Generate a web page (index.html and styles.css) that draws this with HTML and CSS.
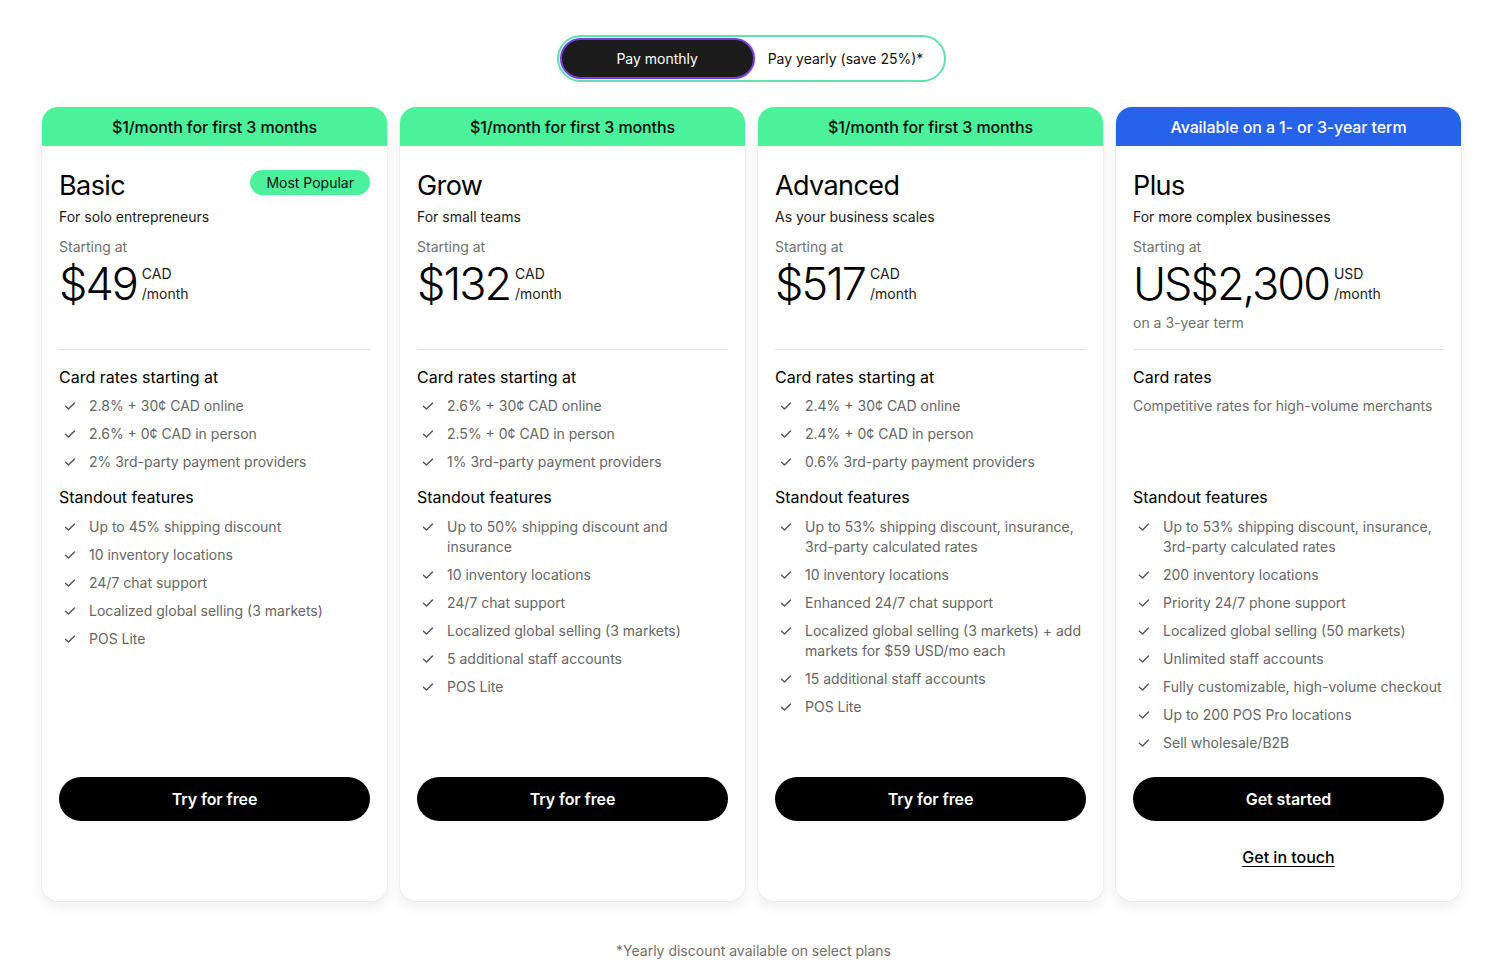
FILE: index.html
```html
<!DOCTYPE html>
<html lang="en">
<head>
<meta charset="utf-8">
<title>Pricing</title>
<link rel="stylesheet" href="styles.css">
</head>
<body>
<main class="page">
  <div class="toggle-wrap">
    <div class="toggle">
      <button class="toggle-opt is-active">Pay monthly</button>
      <button class="toggle-opt">Pay yearly (save 25%)*</button>
    </div>
  </div>

  <section class="plans">
    <article class="card">
      <div class="band band-green">$1/month for first 3 months</div>
      <div class="body">
        <div class="top">
          <div class="title-row">
            <h2 class="name">Basic</h2>
            <span class="badge">Most Popular</span>
          </div>
          <p class="desc">For solo entrepreneurs</p>
          <p class="starting">Starting at</p>
          <div class="price-row">
            <span class="price">$49</span>
            <span class="unit"><span>CAD</span><span>/month</span></span>
          </div>
        </div>
        <hr class="divider">
        <div class="rates">
          <h3 class="sec-title">Card rates starting at</h3>
          <ul class="list">
            <li><svg class="chk" viewBox="0 0 12 12"><path d="M1.5 6.2l3 2.9 6-6.2"/></svg><span>2.8% + 30¢ CAD online</span></li>
            <li><svg class="chk" viewBox="0 0 12 12"><path d="M1.5 6.2l3 2.9 6-6.2"/></svg><span>2.6% + 0¢ CAD in person</span></li>
            <li><svg class="chk" viewBox="0 0 12 12"><path d="M1.5 6.2l3 2.9 6-6.2"/></svg><span>2% 3rd-party payment providers</span></li>
          </ul>
        </div>
        <div class="features">
          <h3 class="sec-title">Standout features</h3>
          <ul class="list">
            <li><svg class="chk" viewBox="0 0 12 12"><path d="M1.5 6.2l3 2.9 6-6.2"/></svg><span>Up to 45% shipping discount</span></li>
            <li><svg class="chk" viewBox="0 0 12 12"><path d="M1.5 6.2l3 2.9 6-6.2"/></svg><span>10 inventory locations</span></li>
            <li><svg class="chk" viewBox="0 0 12 12"><path d="M1.5 6.2l3 2.9 6-6.2"/></svg><span>24/7 chat support</span></li>
            <li><svg class="chk" viewBox="0 0 12 12"><path d="M1.5 6.2l3 2.9 6-6.2"/></svg><span>Localized global selling (3 markets)</span></li>
            <li><svg class="chk" viewBox="0 0 12 12"><path d="M1.5 6.2l3 2.9 6-6.2"/></svg><span>POS Lite</span></li>
          </ul>
        </div>
        <div class="actions">
          <a class="btn" href="#">Try for free</a>
          <div class="foot"></div>
        </div>
      </div>
    </article>

    <article class="card">
      <div class="band band-green">$1/month for first 3 months</div>
      <div class="body">
        <div class="top">
          <div class="title-row">
            <h2 class="name">Grow</h2>
          </div>
          <p class="desc">For small teams</p>
          <p class="starting">Starting at</p>
          <div class="price-row">
            <span class="price">$132</span>
            <span class="unit"><span>CAD</span><span>/month</span></span>
          </div>
        </div>
        <hr class="divider">
        <div class="rates">
          <h3 class="sec-title">Card rates starting at</h3>
          <ul class="list">
            <li><svg class="chk" viewBox="0 0 12 12"><path d="M1.5 6.2l3 2.9 6-6.2"/></svg><span>2.6% + 30¢ CAD online</span></li>
            <li><svg class="chk" viewBox="0 0 12 12"><path d="M1.5 6.2l3 2.9 6-6.2"/></svg><span>2.5% + 0¢ CAD in person</span></li>
            <li><svg class="chk" viewBox="0 0 12 12"><path d="M1.5 6.2l3 2.9 6-6.2"/></svg><span>1% 3rd-party payment providers</span></li>
          </ul>
        </div>
        <div class="features">
          <h3 class="sec-title">Standout features</h3>
          <ul class="list">
            <li><svg class="chk" viewBox="0 0 12 12"><path d="M1.5 6.2l3 2.9 6-6.2"/></svg><span>Up to 50% shipping discount and insurance</span></li>
            <li><svg class="chk" viewBox="0 0 12 12"><path d="M1.5 6.2l3 2.9 6-6.2"/></svg><span>10 inventory locations</span></li>
            <li><svg class="chk" viewBox="0 0 12 12"><path d="M1.5 6.2l3 2.9 6-6.2"/></svg><span>24/7 chat support</span></li>
            <li><svg class="chk" viewBox="0 0 12 12"><path d="M1.5 6.2l3 2.9 6-6.2"/></svg><span>Localized global selling (3 markets)</span></li>
            <li><svg class="chk" viewBox="0 0 12 12"><path d="M1.5 6.2l3 2.9 6-6.2"/></svg><span>5 additional staff accounts</span></li>
            <li><svg class="chk" viewBox="0 0 12 12"><path d="M1.5 6.2l3 2.9 6-6.2"/></svg><span>POS Lite</span></li>
          </ul>
        </div>
        <div class="actions">
          <a class="btn" href="#">Try for free</a>
          <div class="foot"></div>
        </div>
      </div>
    </article>

    <article class="card">
      <div class="band band-green">$1/month for first 3 months</div>
      <div class="body">
        <div class="top">
          <div class="title-row">
            <h2 class="name">Advanced</h2>
          </div>
          <p class="desc">As your business scales</p>
          <p class="starting">Starting at</p>
          <div class="price-row">
            <span class="price">$517</span>
            <span class="unit"><span>CAD</span><span>/month</span></span>
          </div>
        </div>
        <hr class="divider">
        <div class="rates">
          <h3 class="sec-title">Card rates starting at</h3>
          <ul class="list">
            <li><svg class="chk" viewBox="0 0 12 12"><path d="M1.5 6.2l3 2.9 6-6.2"/></svg><span>2.4% + 30¢ CAD online</span></li>
            <li><svg class="chk" viewBox="0 0 12 12"><path d="M1.5 6.2l3 2.9 6-6.2"/></svg><span>2.4% + 0¢ CAD in person</span></li>
            <li><svg class="chk" viewBox="0 0 12 12"><path d="M1.5 6.2l3 2.9 6-6.2"/></svg><span>0.6% 3rd-party payment providers</span></li>
          </ul>
        </div>
        <div class="features">
          <h3 class="sec-title">Standout features</h3>
          <ul class="list">
            <li><svg class="chk" viewBox="0 0 12 12"><path d="M1.5 6.2l3 2.9 6-6.2"/></svg><span>Up to 53% shipping discount, insurance, 3rd-party calculated rates</span></li>
            <li><svg class="chk" viewBox="0 0 12 12"><path d="M1.5 6.2l3 2.9 6-6.2"/></svg><span>10 inventory locations</span></li>
            <li><svg class="chk" viewBox="0 0 12 12"><path d="M1.5 6.2l3 2.9 6-6.2"/></svg><span>Enhanced 24/7 chat support</span></li>
            <li><svg class="chk" viewBox="0 0 12 12"><path d="M1.5 6.2l3 2.9 6-6.2"/></svg><span>Localized global selling (3 markets) + add markets for $59 USD/mo each</span></li>
            <li><svg class="chk" viewBox="0 0 12 12"><path d="M1.5 6.2l3 2.9 6-6.2"/></svg><span>15 additional staff accounts</span></li>
            <li><svg class="chk" viewBox="0 0 12 12"><path d="M1.5 6.2l3 2.9 6-6.2"/></svg><span>POS Lite</span></li>
          </ul>
        </div>
        <div class="actions">
          <a class="btn" href="#">Try for free</a>
          <div class="foot"></div>
        </div>
      </div>
    </article>

    <article class="card">
      <div class="band band-blue">Available on a 1- or 3-year term</div>
      <div class="body">
        <div class="top">
          <div class="title-row">
            <h2 class="name">Plus</h2>
          </div>
          <p class="desc">For more complex businesses</p>
          <p class="starting">Starting at</p>
          <div class="price-row">
            <span class="price">US$2,300</span>
            <span class="unit"><span>USD</span><span>/month</span></span>
          </div>
          <p class="term">on a 3-year term</p>
        </div>
        <hr class="divider">
        <div class="rates">
          <h3 class="sec-title">Card rates</h3>
          <p class="rates-note">Competitive rates for high-volume merchants</p>
        </div>
        <div class="features">
          <h3 class="sec-title">Standout features</h3>
          <ul class="list">
            <li><svg class="chk" viewBox="0 0 12 12"><path d="M1.5 6.2l3 2.9 6-6.2"/></svg><span>Up to 53% shipping discount, insurance, 3rd-party calculated rates</span></li>
            <li><svg class="chk" viewBox="0 0 12 12"><path d="M1.5 6.2l3 2.9 6-6.2"/></svg><span>200 inventory locations</span></li>
            <li><svg class="chk" viewBox="0 0 12 12"><path d="M1.5 6.2l3 2.9 6-6.2"/></svg><span>Priority 24/7 phone support</span></li>
            <li><svg class="chk" viewBox="0 0 12 12"><path d="M1.5 6.2l3 2.9 6-6.2"/></svg><span>Localized global selling (50 markets)</span></li>
            <li><svg class="chk" viewBox="0 0 12 12"><path d="M1.5 6.2l3 2.9 6-6.2"/></svg><span>Unlimited staff accounts</span></li>
            <li><svg class="chk" viewBox="0 0 12 12"><path d="M1.5 6.2l3 2.9 6-6.2"/></svg><span>Fully customizable, high-volume checkout</span></li>
            <li><svg class="chk" viewBox="0 0 12 12"><path d="M1.5 6.2l3 2.9 6-6.2"/></svg><span>Up to 200 POS Pro locations</span></li>
            <li><svg class="chk" viewBox="0 0 12 12"><path d="M1.5 6.2l3 2.9 6-6.2"/></svg><span>Sell wholesale/B2B</span></li>
          </ul>
        </div>
        <div class="actions">
          <a class="btn" href="#">Get started</a>
          <div class="foot"><a class="link" href="#">Get in touch</a></div>
        </div>
      </div>
    </article>
  </section>

  <p class="note">*Yearly discount available on select plans</p>
</main>
</body>
</html>
```

FILE: styles.css
```css
* { box-sizing: border-box; }

html, body {
  margin: 0;
  padding: 0;
  background: #ffffff;
}

body {
  font-family: Inter, "Noto Sans", "Liberation Sans", sans-serif;
  color: #000;
  -webkit-font-smoothing: antialiased;
}

.page {
  padding-top: 35px;
}

.toggle-wrap {
  display: flex;
  justify-content: center;
  padding-right: 4px;
}

.toggle {
  display: flex;
  align-items: center;
  height: 47px;
  padding: 1px;
  border: 2px solid #5fe3ad;
  border-radius: 999px;
  background: #fff;
}

.toggle-opt {
  font-family: inherit;
  font-size: 14px;
  line-height: 20px;
  border: 0;
  background: transparent;
  color: #111;
  padding: 0 20px 0 13px;
  height: 40px;
  border-radius: 999px;
  cursor: pointer;
}

.toggle-opt.is-active {
  width: 195px;
  height: 41px;
  padding: 0;
  background: #1c1c1c;
  color: #fff;
  border: 2px solid #7540de;
  box-shadow: 0 0 0 1px rgba(117, 64, 222, 0.15);
}

.plans {
  display: grid;
  grid-template-columns: repeat(4, 345px);
  gap: 13px;
  width: 1419px;
  margin: 25px 0 0 42px;
}

.card {
  display: flex;
  flex-direction: column;
  background: #fff;
  border-radius: 16px;
  box-shadow: 0 0 0 1px rgba(0, 0, 0, 0.035), 0 6px 14px rgba(0, 0, 0, 0.07);
  overflow: hidden;
}

.band {
  height: 39px;
  display: flex;
  align-items: center;
  justify-content: center;
  font-size: 16px;
  font-weight: 500;
  line-height: 24px;
  letter-spacing: -0.1px;
}

.band-green {
  background: #4cf29b;
  color: #0a0a0a;
}

.band-blue {
  background: #2762ea;
  color: #fff;
}

.body {
  flex: 1;
  display: flex;
  flex-direction: column;
  padding: 22px 17px 0 17px;
}

.top {
  min-height: 181px;
}

.title-row {
  display: flex;
  justify-content: space-between;
  align-items: flex-start;
}

.name {
  margin: 0;
  font-size: 27px;
  line-height: 36px;
  font-weight: 400;
  letter-spacing: -0.6px;
}

.badge {
  margin-top: 2px;
  height: 25px;
  padding: 0 16px;
  border-radius: 999px;
  background: #4cf29b;
  font-size: 14px;
  line-height: 25px;
  color: #111;
}

.desc {
  margin: 3px 0 0;
  font-size: 14px;
  line-height: 20px;
  color: #1a1a1a;
}

.starting {
  margin: 10px 0 0;
  font-size: 14px;
  line-height: 20px;
  color: #707070;
}

.price-row {
  display: flex;
  align-items: center;
  gap: 5px;
  margin-top: 4px;
}

.price {
  font-size: 45px;
  line-height: 46px;
  font-weight: 300;
  letter-spacing: -2px;
}

.unit {
  display: flex;
  flex-direction: column;
  font-size: 14px;
  line-height: 20px;
  color: #1a1a1a;
}

.term {
  margin: 6px 0 0;
  font-size: 14px;
  line-height: 20px;
  color: #707070;
}

.divider {
  margin: 0 0 15px;
  border: 0;
  border-top: 1px solid #e3e3e3;
}

.rates {
  min-height: 120px;
}

.sec-title {
  margin: 0;
  font-size: 16px;
  line-height: 24px;
  font-weight: 400;
}

.rates-note {
  margin: 7px 0 0;
  font-size: 14px;
  line-height: 20px;
  color: #6b6b6b;
}

.list {
  list-style: none;
  margin: 7px 0 0;
  padding: 0;
  display: flex;
  flex-direction: column;
  gap: 8px;
}

.features .list {
  margin-top: 8px;
}

.list li {
  display: flex;
  align-items: flex-start;
  font-size: 14px;
  line-height: 20px;
  color: #666666;
}

.chk {
  flex: none;
  width: 12px;
  height: 12px;
  margin: 4px 13px 0 5px;
  fill: none;
  stroke: #555;
  stroke-width: 1.4;
  stroke-linecap: round;
  stroke-linejoin: round;
}

.actions {
  margin-top: auto;
  padding-top: 24px;
}

.btn {
  display: flex;
  align-items: center;
  justify-content: center;
  height: 44px;
  border-radius: 999px;
  background: #000;
  color: #fff;
  font-size: 16px;
  font-weight: 600;
  text-decoration: none;
  letter-spacing: -0.1px;
}

.foot {
  height: 80px;
  display: flex;
  justify-content: center;
  padding-top: 24px;
}

.link {
  font-size: 16px;
  line-height: 24px;
  font-weight: 500;
  color: #000;
  text-decoration: underline;
  text-underline-offset: 3px;
  height: 24px;
}

.note {
  margin: 40px 0 0;
  text-align: center;
  font-size: 14px;
  line-height: 20px;
  color: #707070;
}
```
